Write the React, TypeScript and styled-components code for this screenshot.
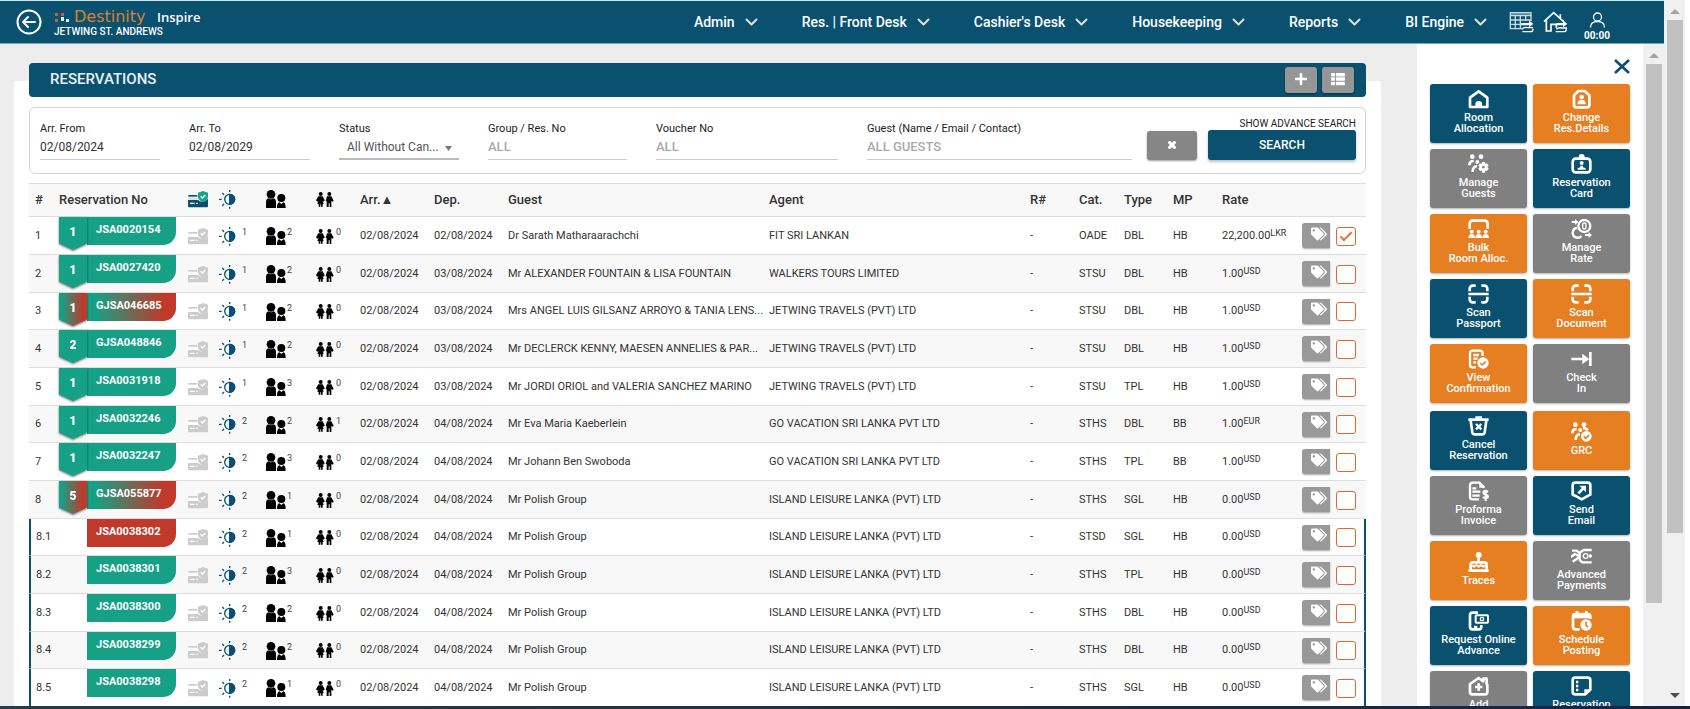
import React from "react";
import styled, { createGlobalStyle, css } from "styled-components";
import { FaPlus, FaTags, FaThList, FaTimes } from "react-icons/fa";

const color = {
  navy: "#0a506f",
  orange: "#e67e22",
  grey: "#808080",
  green: "#16a085",
  red: "#c0392b",
  line: "#dddddd",
};

type Tone = "navy" | "orange" | "grey";
type Status = "ok" | "mixed" | "off";

const GlobalStyle = createGlobalStyle`
  *, *::before, *::after { box-sizing: border-box; }
  body { margin: 0; background: #ffffff; color: #222222; font-family: Roboto, "Liberation Sans", sans-serif; font-size: 12px; }
  button, input, select { font-family: inherit; margin: 0; }
  button { cursor: pointer; }
`;

/* ---------- page frame ---------- */

const Page = styled.div`
  display: flex;
  flex-direction: column;
  height: 100vh;
  overflow: hidden;
`;

const Frame = styled.div`
  display: flex;
  flex: 1;
  min-height: 0;
  padding-right: 5px;
`;

const Screen = styled.div`
  display: flex;
  flex-direction: column;
  flex: 1;
  min-width: 0;
`;

const Taskbar = styled.div`
  flex: none;
  height: 3px;
  background: linear-gradient(90deg, #243d4a, #1b2145);
`;

const Body = styled.div`
  display: flex;
  flex: 1;
  min-height: 0;
`;

const Main = styled.main`
  flex: 1;
  min-width: 0;
  overflow: hidden;
  padding: 37px 36px 0 14px;
  background: #ededed;
`;

const Panel = styled.section`
  min-height: 100%;
  padding: 0 15px;
  background: #ffffff;
  border-radius: 3px;
`;

/* ---------- scroll bars ---------- */

const Track = styled.div`
  display: flex;
  flex-direction: column;
  flex: none;
  align-items: center;
  width: 21px;
  background: #f0f0f0;
`;

const Arrow = styled.svg`
  flex: none;
  width: 10px;
  height: 20px;
`;

const Thumb = styled.div<{ $share: number }>`
  flex: ${(p) => p.$share};
  width: 16px;
  background: #c1c1c1;
`;

const Rest = styled.div<{ $share: number }>`
  flex: ${(p) => p.$share};
`;

function ScrollBar({ share, end }: { share: number; end?: boolean }) {
  return (
    <Track aria-hidden="true">
      <Arrow viewBox="0 0 10 20"><path d="M0 14l5-5 5 5z" fill="#a3a3a3" /></Arrow>
      <Thumb $share={share} />
      <Rest $share={100 - share} />
      {end && <Arrow viewBox="0 0 10 20"><path d="M0 7l5 5 5-5z" fill="#505050" /></Arrow>}
    </Track>
  );
}

/* ---------- top bar ---------- */

const TopBar = styled.header`
  display: flex;
  flex: none;
  align-items: center;
  height: 44px;
  padding: 0 53px 0 16px;
  color: #ffffff;
  background: ${color.navy};
  border-top: 1px solid #d3e6ec;
  border-bottom: 1px solid #7ea3b3;
`;

const BareButton = styled.button`
  display: flex;
  padding: 0;
  color: inherit;
  background: none;
  border: 0;
`;

const Brand = styled.div`
  display: flex;
  flex-direction: column;
  margin-left: 12px;
  padding-top: 2px;
`;

const BrandLine = styled.div`
  display: flex;
  align-items: center;
  height: 18px;
`;

const BrandName = styled.span`
  min-width: 76px;
  margin-left: 4px;
  color: #d9822f;
  font: 16px/18px "DejaVu Sans", sans-serif;
`;

const BrandProduct = styled.span`
  margin-left: 7px;
  font: 600 13px/18px "Open Sans", sans-serif;
`;

const Hotel = styled.span`
  font-size: 10px;
  font-weight: 500;
  line-height: 12px;
`;

const Nav = styled.nav`
  display: flex;
  gap: 44px;
  margin-left: auto;
`;

const NavItem = styled.button`
  display: flex;
  align-items: center;
  gap: 10px;
  padding: 0 0 1px;
  color: #ffffff;
  font-size: 14px;
  font-weight: 500;
  background: none;
  border: 0;
`;

const Tools = styled.div`
  display: flex;
  align-items: center;
  gap: 9px;
  margin-left: 22px;
`;

const User = styled.button`
  display: flex;
  flex-direction: column;
  align-items: center;
  gap: 3px;
  width: 28px;
  margin-left: 6px;
  padding: 8px 0 0;
  color: #ffffff;
  font-size: 10px;
  font-weight: 700;
  line-height: 10px;
  background: none;
  border: 0;
`;

const NAV = ["Admin", "Res. | Front Desk", "Cashier's Desk", "Housekeeping", "Reports", "BI Engine"];

function Header() {
  return (
    <TopBar>
      <BareButton aria-label="Back">
        <svg width="26" height="26" viewBox="0 0 26 26" fill="none" stroke="#fff" strokeWidth="2" strokeLinecap="round" strokeLinejoin="round">
          <circle cx="13" cy="13" r="11.500" />
          <path d="M19 13H7.500M12 8l-5 5 5 5" />
        </svg>
      </BareButton>
      <Brand>
        <BrandLine>
          <svg width="16" height="12" viewBox="0 0 16 12" aria-hidden="true">
            <path d="M1 2h3v3H1zM1 8h3v3H1z" fill="#b5674a" />
            <path d="M7 2h3v3H7z" fill="#d9534f" />
            <path d="M7 6h3v4H7zM12 8h3v3h-3z" fill="#e8edf2" />
          </svg>
          <BrandName>Destinity</BrandName>
          <BrandProduct>Inspire</BrandProduct>
        </BrandLine>
        <Hotel>JETWING ST. ANDREWS</Hotel>
      </Brand>
      <Nav>
        {NAV.map((name) => (
          <NavItem key={name}>
            {name}
            <svg width="13" height="8" viewBox="0 0 13 8" fill="none" stroke="#e3e0d2" strokeWidth="2" strokeLinecap="round" strokeLinejoin="round">
              <path d="M1.500 1.500l5 5 5-5" />
            </svg>
          </NavItem>
        ))}
      </Nav>
      <Tools>
        <BareButton aria-label="Calendar">
          <svg width="25" height="22" viewBox="0 0 75 66" fill="none" stroke="#c9dbe3" strokeWidth="4">
            <path d="M4 5h62v9H4z" fill="#c9dbe3" fillOpacity=".4" />
            <path d="M4 14v39h34M66 14v16M4 27h62M4 40h36M19 14v39M34 14v39M50 14v16" />
            <path d="M36 36h24v-8l13 11-13 10v-6H36z" fill="#fff" stroke="none" />
            <path d="M38 55c8-8 14-6 18-5h16M40 62h26c5 0 6-6 6-9" stroke="#fff" />
          </svg>
        </BareButton>
        <BareButton aria-label="Home">
          <svg width="25" height="22" viewBox="0 0 75 66" fill="none" stroke="#fff" strokeWidth="5">
            <path d="M3 32L32 5l30 27M10 27v33h14V40h16v10M52 10v10" />
            <path d="M40 36h20v-8l13 11-13 10v-6H40z" fill="#fff" stroke="none" />
            <path d="M40 55c6-6 12-5 16-4h16M38 62h26c5 0 6-6 6-9" strokeWidth="4" />
          </svg>
        </BareButton>
        <User>
          <svg width="17" height="16" viewBox="0 0 17 16" fill="none" stroke="#fff" strokeWidth="1.300">
            <circle cx="8.500" cy="5" r="4" />
            <path d="M1.500 15.500c0-4 3-6 7-6s7 2 7 6" />
          </svg>
          00:00
        </User>
      </Tools>
    </TopBar>
  );
}

/* ---------- title and search ---------- */

const TitleBar = styled.div`
  display: flex;
  position: relative;
  top: -18px;
  align-items: center;
  gap: 5px;
  height: 34px;
  margin-bottom: -8px;
  padding: 0 12px 0 21px;
  background: ${color.navy};
  border-radius: 4px;
`;

const Title = styled.h1`
  flex: 1;
  margin: 0;
  padding-bottom: 2px;
  color: #e9f3f7;
  font-size: 15px;
  font-weight: 500;
  line-height: 18px;
`;

const SquareButton = styled.button`
  display: flex;
  align-items: center;
  justify-content: center;
  width: 32px;
  height: 26px;
  padding: 0 0 2px;
  color: #ffffff;
  font-size: 14px;
  background: #969696;
  border: 0;
  border-radius: 3px;
  box-shadow: 0 1px 2px rgba(0, 0, 0, 0.4);
`;

const SearchForm = styled.form`
  display: flex;
  align-items: flex-end;
  padding: 10px 9px 13px 10px;
  border: 1px solid #d4d4d4;
  border-radius: 6px;
`;

const Fields = styled.div`
  display: grid;
  flex: 1;
  grid-template-columns: 120px 121px 120px 139px 182px 1fr;
  gap: 29px;
`;

const Field = styled.div`
  display: flex;
  flex-direction: column;
  position: relative;
`;

const FieldLabel = styled.label`
  font-size: 11px;
  line-height: 14px;
  white-space: nowrap;
`;

const controlText = css`
  width: 100%;
  height: 24px;
  padding: 0 0 1px;
  color: #333333;
  font-size: 12px;
  background: none;
  border: 0;
  border-radius: 0;
  outline: 0;
`;

const TextBox = styled.input`
  ${controlText}
  border-bottom: 1px solid #cccccc;
  &::placeholder { color: #aaaaaa; font-size: 13px; font-weight: 500; opacity: 1; }
`;

const Picker = styled.select`
  ${controlText}
  padding-left: 8px;
  color: #555555;
  appearance: none;
  border-bottom: 2px solid #bbbbbb;
`;

const PickerArrow = styled.svg`
  position: absolute;
  right: 7px;
  bottom: 9px;
  width: 7px;
  height: 5px;
  pointer-events: none;
`;

const ClearButton = styled(SquareButton)`
  width: 50px;
  height: 29px;
  margin: 0 11px 0 15px;
  background: #868686;
`;

const ClearIcon = styled(FaTimes)`
  width: 10px;
  height: 10px;
  stroke: #ffffff;
  stroke-width: 60;
`;

const SubmitArea = styled.div`
  display: flex;
  flex-direction: column;
  width: 148px;
`;

const AdvancedLink = styled.a`
  align-self: flex-end;
  color: #222222;
  font-size: 10px;
  line-height: 12px;
  text-decoration: none;
  white-space: nowrap;
`;

const SearchButton = styled.button`
  height: 30px;
  padding: 0 0 1px;
  color: #ffffff;
  font-size: 12px;
  font-weight: 500;
  background: ${color.navy};
  border: 0;
  border-radius: 3px;
  box-shadow: 0 2px 3px rgba(0, 0, 0, 0.25);
`;

function TextField({ id, label, value, hint }: { id: string; label: string; value?: string; hint?: string }) {
  return (
    <Field>
      <FieldLabel htmlFor={id}>{label}</FieldLabel>
      <TextBox id={id} defaultValue={value} placeholder={hint} />
    </Field>
  );
}

function Search() {
  return (
    <SearchForm onSubmit={(e) => e.preventDefault()}>
      <Fields>
        <TextField id="from" label="Arr. From" value="02/08/2024" />
        <TextField id="to" label="Arr. To" value="02/08/2029" />
        <Field>
          <FieldLabel htmlFor="status">Status</FieldLabel>
          <Picker id="status"><option>All Without Can...</option></Picker>
          <PickerArrow viewBox="0 0 7 5"><path d="M0 0h7L3.500 5z" fill="#777" /></PickerArrow>
        </Field>
        <TextField id="group" label="Group / Res. No" hint="ALL" />
        <TextField id="voucher" label="Voucher No" hint="ALL" />
        <TextField id="guest" label="Guest (Name / Email / Contact)" hint="ALL GUESTS" />
      </Fields>
      <ClearButton type="button" aria-label="Clear"><ClearIcon /></ClearButton>
      <SubmitArea>
        <AdvancedLink href="#advanced">SHOW ADVANCE SEARCH</AdvancedLink>
        <SearchButton type="submit">SEARCH</SearchButton>
      </SubmitArea>
    </SearchForm>
  );
}

/* ---------- table icons ---------- */

function CardIcon({ active }: { active?: boolean }) {
  const base = active ? color.navy : "#cccccc";
  return (
    <svg width="20" height="17" viewBox="0 0 60 51">
      <path d="M1 12h27v5H1z" fill={base} />
      <path d="M0 20h30v6H0z" fill={active ? "#d5dde1" : "#ffffff"} />
      <path d="M0 27h31c5 6 16 9 29-4v23a3 3 0 0 1-3 3H3a3 3 0 0 1-3-3z" fill={base} />
      <path d="M6 37h14M25 37h4" stroke="#fff" strokeWidth="4" />
      <path d="M45 0l15 5v12c0 8-6 13-15 17-9-4-15-9-15-17V5z" fill={active ? "#17a58a" : "#cccccc"} />
      <path d="M38 16l5 5 9-9" fill="none" stroke="#fff" strokeWidth="4" />
    </svg>
  );
}

function NightIcon() {
  return (
    <svg width="17" height="19" viewBox="0 0 51 57" fill="none" stroke="#0a4f78" strokeWidth="4">
      <circle cx="32" cy="28" r="15" />
      <path d="M32 13a15 15 0 0 1 0 30z" fill="#0a4f78" />
      <path d="M32 0v6M32 50v6M0 28h8M10 9l5 5M10 47l5-5" />
    </svg>
  );
}

function AdultsIcon() {
  return (
    <svg width="20" height="18" viewBox="0 0 60 54">
      <circle cx="15" cy="13" r="13" />
      <path d="M0 54V37c0-7 3-11 7-12 5 4 11 4 16 0 4 1 7 5 7 12v17z" />
      <circle cx="46" cy="24" r="12" />
      <path d="M33 54c0-10 2-16 7-17l6 5 6-5c5 1 7 7 7 17z" />
    </svg>
  );
}

function KidsIcon() {
  return (
    <svg width="18" height="15" viewBox="0 0 54 45">
      <circle cx="14" cy="6" r="6" />
      <path d="M7 13h13l6 12-3 4-3-2 3 9h-3v8h-5v-7h-2v7H8v-8H4l3-9-3 2-4-4z" />
      <circle cx="40" cy="6" r="6" />
      <path d="M33 13h13l7 13-3 3-4-2v18h-5V34h-3v11h-6V28l-3-1z" />
    </svg>
  );
}

/* ---------- reservations table ---------- */

const Grid = styled.table`
  width: 100%;
  margin-top: 9px;
  table-layout: fixed;
  border-collapse: separate;
  border-spacing: 0;
`;

const HeadCell = styled.th`
  height: 34px;
  padding: 0 0 2px;
  color: #333333;
  font-size: 13px;
  font-weight: 500;
  text-align: left;
  white-space: nowrap;
  background: #f8f8f8;
  border: solid ${color.line};
  border-width: 1px 0;
  &:first-child { padding-left: 6px; }
  svg { display: block; }
`;

const Cell = styled.td`
  height: inherit;
  padding: 0;
  overflow: hidden;
  color: #333333;
  font-size: 11px;
  line-height: 14px;
  text-overflow: ellipsis;
  white-space: nowrap;
  border-bottom: 1px solid ${color.line};
`;

const Row = styled.tr<{ $child: boolean }>`
  height: 38px;
  &:nth-child(3n) { height: 37px; }
  &:nth-child(even) { background: #f8f8f8; }
  ${Cell}:first-child { padding-left: 6px; }
  ${(p) =>
    p.$child &&
    css`
      ${Cell}:first-child { padding-left: 5px; border-left: 2px solid ${color.navy}; }
      ${Cell}:last-child { border-right: 2px solid ${color.navy}; }
    `}
`;

const NameCell = styled(Cell)`
  padding-right: 4px;
`;

const TagCell = styled(Cell)`
  overflow: visible;
  vertical-align: top;
`;

const fill = {
  ok: color.green,
  mixed: `linear-gradient(90deg, ${color.green} 10%, ${color.red} 85%)`,
  off: color.red,
};

const TagLine = styled.div`
  display: grid;
  grid-template-columns: 28px 89px;
  align-items: start;
  height: 28px;
`;

const RibbonShadow = styled.div`
  position: relative;
  z-index: 1;
  filter: drop-shadow(0 1px 1px rgba(0, 0, 0, 0.55));
`;

const Ribbon = styled.div<{ $status: Status }>`
  height: 33px;
  color: #ffffff;
  font-size: 12px;
  font-weight: 900;
  line-height: 30px;
  text-align: center;
  background: ${(p) => fill[p.$status]};
  clip-path: polygon(0 0, 100% 0, 100% 80%, 50% 100%, 0 80%);
`;

const Code = styled.a<{ $status: Status }>`
  grid-column: 2;
  height: 28px;
  padding-left: 9px;
  color: #ffffff;
  font-size: 11px;
  font-weight: 700;
  line-height: 26px;
  text-decoration: none;
  background: ${(p) => fill[p.$status]};
  border-bottom-right-radius: 13px;
`;

const Count = styled.div<{ $gap: number }>`
  display: flex;
  align-items: center;
  gap: ${(p) => p.$gap}px;
  padding-top: 1px;
  span {
    padding-bottom: 8px;
    color: #444444;
    font-size: 9px;
    line-height: 10px;
  }
`;

const Money = styled.span`
  sup {
    font-size: 9px;
    line-height: 8px;
    vertical-align: 3px;
  }
`;

const TagButton = styled.button`
  display: flex;
  align-items: center;
  justify-content: center;
  width: 28px;
  height: 25px;
  padding: 0 0 4px 6px;
  color: #ffffff;
  font-size: 16px;
  background: #999999;
  border: 0;
  border-radius: 3px 0 0 3px;
  box-shadow: 0 1px 2px rgba(0, 0, 0, 0.35);
`;

const Tick = styled.input`
  display: grid;
  place-items: center;
  width: 20px;
  height: 19px;
  margin-top: 1px;
  background: #ffffff;
  border: 1px solid #e8642b;
  border-radius: 3px;
  outline: 0;
  appearance: none;
  &:checked::before {
    content: "";
    width: 12px;
    height: 6px;
    margin-bottom: 3px;
    border: solid #e8702a;
    border-width: 0 0 2px 2px;
    transform: rotate(-45deg);
  }
`;

interface Booking {
  no: string;
  count?: number;
  code: string;
  status: Status;
  nights: number;
  adults: number;
  kids: number;
  dep: string;
  guest: string;
  agent: string;
  cat: string;
  type: string;
  mp: string;
  rate: string;
  cur: string;
}

const JET = "JETWING TRAVELS (PVT) LTD";
const GO = "GO VACATION SRI LANKA PVT LTD";
const ISLAND = "ISLAND LEISURE LANKA (PVT) LTD";

const booking = (
  no: string, count: number | undefined, code: string, status: Status,
  nights: number, adults: number, kids: number, dep: string,
  guest: string, agent: string, cat: string, type: string, mp: string, rate: string, cur: string,
): Booking => ({ no, count, code, status, nights, adults, kids, dep, guest, agent, cat, type, mp, rate, cur });

const BOOKINGS: Booking[] = [
  booking("1", 1, "JSA0020154", "ok", 1, 2, 0, "02/08/2024", "Dr Sarath Matharaarachchi", "FIT SRI LANKAN", "OADE", "DBL", "HB", "22,200.00", "LKR"),
  booking("2", 1, "JSA0027420", "ok", 1, 2, 0, "03/08/2024", "Mr ALEXANDER FOUNTAIN & LISA FOUNTAIN", "WALKERS TOURS LIMITED", "STSU", "DBL", "HB", "1.00", "USD"),
  booking("3", 1, "GJSA046685", "mixed", 1, 2, 0, "03/08/2024", "Mrs ANGEL LUIS GILSANZ ARROYO & TANIA LENS...", JET, "STSU", "DBL", "HB", "1.00", "USD"),
  booking("4", 2, "GJSA048846", "ok", 1, 2, 0, "03/08/2024", "Mr DECLERCK KENNY, MAESEN ANNELIES & PAR...", JET, "STSU", "DBL", "HB", "1.00", "USD"),
  booking("5", 1, "JSA0031918", "ok", 1, 3, 0, "03/08/2024", "Mr JORDI ORIOL and VALERIA SANCHEZ MARINO", JET, "STSU", "TPL", "HB", "1.00", "USD"),
  booking("6", 1, "JSA0032246", "ok", 2, 2, 1, "04/08/2024", "Mr Eva Maria Kaeberlein", GO, "STHS", "DBL", "BB", "1.00", "EUR"),
  booking("7", 1, "JSA0032247", "ok", 2, 3, 0, "04/08/2024", "Mr Johann Ben Swoboda", GO, "STHS", "TPL", "BB", "1.00", "USD"),
  booking("8", 5, "GJSA055877", "mixed", 2, 1, 0, "04/08/2024", "Mr Polish Group", ISLAND, "STHS", "SGL", "HB", "0.00", "USD"),
  booking("8.1", undefined, "JSA0038302", "off", 2, 1, 0, "04/08/2024", "Mr Polish Group", ISLAND, "STSD", "SGL", "HB", "0.00", "USD"),
  booking("8.2", undefined, "JSA0038301", "ok", 2, 3, 0, "04/08/2024", "Mr Polish Group", ISLAND, "STHS", "TPL", "HB", "0.00", "USD"),
  booking("8.3", undefined, "JSA0038300", "ok", 2, 2, 0, "04/08/2024", "Mr Polish Group", ISLAND, "STHS", "DBL", "HB", "0.00", "USD"),
  booking("8.4", undefined, "JSA0038299", "ok", 2, 2, 0, "04/08/2024", "Mr Polish Group", ISLAND, "STHS", "DBL", "HB", "0.00", "USD"),
  booking("8.5", undefined, "JSA0038298", "ok", 2, 1, 0, "04/08/2024", "Mr Polish Group", ISLAND, "STHS", "SGL", "HB", "0.00", "USD"),
];

/* Guest and Agent have no width of their own and share what is left. */
const COLUMNS: (number | undefined)[] = [30, 129, 31, 47, 50, 44, 74, 74, undefined, undefined, 49, 45, 49, 49, 80, 34, 30];

function Bookings() {
  return (
    <Grid>
      <colgroup>
        {COLUMNS.map((width, i) => <col key={i} width={width} />)}
      </colgroup>
      <thead>
        <tr>
          <HeadCell>#</HeadCell>
          <HeadCell>Reservation No</HeadCell>
          <HeadCell aria-label="Guarantee"><CardIcon active /></HeadCell>
          <HeadCell aria-label="Nights"><NightIcon /></HeadCell>
          <HeadCell aria-label="Adults"><AdultsIcon /></HeadCell>
          <HeadCell aria-label="Children"><KidsIcon /></HeadCell>
          <HeadCell>Arr.▲</HeadCell>
          <HeadCell>Dep.</HeadCell>
          <HeadCell>Guest</HeadCell>
          <HeadCell>Agent</HeadCell>
          <HeadCell>R#</HeadCell>
          <HeadCell>Cat.</HeadCell>
          <HeadCell>Type</HeadCell>
          <HeadCell>MP</HeadCell>
          <HeadCell>Rate</HeadCell>
          <HeadCell aria-label="Tags" />
          <HeadCell aria-label="Selected" />
        </tr>
      </thead>
      <tbody>
        {BOOKINGS.map((b) => (
          <Row key={b.no} $child={b.count === undefined}>
            <Cell>{b.no}</Cell>
            <TagCell>
              <TagLine>
                {b.count !== undefined && (
                  <RibbonShadow><Ribbon $status={b.status}>{b.count}</Ribbon></RibbonShadow>
                )}
                <Code href={`#${b.code}`} $status={b.status}>{b.code}</Code>
              </TagLine>
            </TagCell>
            <Cell><Count $gap={0}><CardIcon /></Count></Cell>
            <Cell><Count $gap={6}><NightIcon /><span>{b.nights}</span></Count></Cell>
            <Cell><Count $gap={1}><AdultsIcon /><span>{b.adults}</span></Count></Cell>
            <Cell><Count $gap={2}><KidsIcon /><span>{b.kids}</span></Count></Cell>
            <Cell>02/08/2024</Cell>
            <Cell>{b.dep}</Cell>
            <NameCell>{b.guest}</NameCell>
            <Cell>{b.agent}</Cell>
            <Cell>-</Cell>
            <Cell>{b.cat}</Cell>
            <Cell>{b.type}</Cell>
            <Cell>{b.mp}</Cell>
            <Cell><Money>{b.rate}<sup>{b.cur}</sup></Money></Cell>
            <Cell><TagButton aria-label={`Tags of ${b.code}`}><FaTags /></TagButton></Cell>
            <Cell><Tick type="checkbox" aria-label={`Select ${b.code}`} defaultChecked={b.no === "1"} /></Cell>
          </Row>
        ))}
      </tbody>
    </Grid>
  );
}

/* ---------- action drawer ---------- */

const Drawer = styled.aside`
  flex: none;
  width: 226px;
  padding: 15px 13px 0;
  overflow: hidden;
  background: #ffffff;
`;

const CloseButton = styled(BareButton)`
  margin: 0 0 10px auto;
  color: ${color.navy};
`;

const ActionGroup = styled.div`
  display: grid;
  grid-template-columns: 1fr 1fr;
  grid-auto-rows: 59px;
  gap: 6px;
  margin-bottom: 8px;
`;

const Action = styled.button<{ $tone: Tone }>`
  display: flex;
  flex-direction: column;
  align-items: center;
  justify-content: center;
  gap: 3px;
  padding: 0 0 4px;
  color: #ffffff;
  font-size: 11px;
  font-weight: 500;
  line-height: 11px;
  white-space: pre-line;
  background: ${(p) => color[p.$tone]};
  border: 0;
  border-radius: 3px;
  box-shadow: 0 1px 2px rgba(0, 0, 0, 0.3);
`;

const Glyph = styled.svg`
  flex: none;
  width: 21px;
  height: 20px;
  fill: none;
  stroke: #ffffff;
  stroke-width: 8;
  stroke-linejoin: round;
  .solid { fill: #ffffff; stroke: none; }
  .thin { stroke-width: 4; }
`;

const crowd = (
  <>
    <circle className="solid" cx="13" cy="8" r="7" />
    <circle className="solid" cx="39" cy="8" r="7" />
    <circle className="solid" cx="28" cy="24" r="6" />
    <path d="M4 34c0-9 4-13 13-13M14 54c0-12 4-17 13-18" />
  </>
);

const icons: Record<string, React.ReactNode> = {
  house: (
    <>
      <path d="M6 54V26L32 7l26 19v28z" />
      <path className="solid" d="M22 56V44a10 8 0 0 1 20 0v12z" />
    </>
  ),
  badge: (
    <>
      <path d="M22 6h19l14 13v29a7 7 0 0 1-7 7H16a7 7 0 0 1-7-7V19z" />
      <circle className="solid" cx="32" cy="24" r="7" />
      <path className="solid" d="M19 46c0-9 5-14 13-14s13 5 13 14z" />
    </>
  ),
  manage: (
    <>
      {crowd}
      <path className="solid" fillRule="evenodd" d="M42 24h9l1 6 5-2 5 7-4 4 4 5-5 7-5-2-1 7h-9l-1-7-5 2-5-7 4-5-4-4 5-7 5 2zM46 35a4 4 0 1 0 .100 0z" />
    </>
  ),
  card: (
    <>
      <rect x="5" y="14" width="53" height="41" rx="9" />
      <circle className="solid" cx="32" cy="9" r="9" />
      <circle className="solid" cx="32" cy="27" r="6" />
      <path className="solid" d="M20 47v-4l8-3v-5h8v5l8 3v4z" />
    </>
  ),
  bulk: (
    <>
      <path d="M5 29V14a9 9 0 0 1 9-9h36a9 9 0 0 1 9 9v15" />
      <circle className="solid" cx="11" cy="38" r="6" />
      <circle className="solid" cx="32" cy="38" r="6" />
      <circle className="solid" cx="53" cy="38" r="6" />
      <path className="solid" d="M1 57c0-8 4-12 10-12s10 4 10 12zM22 57c0-8 4-12 10-12s10 4 10 12zM43 57c0-8 4-12 10-12s10 4 10 12z" />
    </>
  ),
  rate: (
    <>
      <circle cx="40" cy="21" r="18" strokeWidth="7" />
      <rect className="thin" x="35" y="12" width="10" height="18" rx="5" />
      <path d="M18 27c-15 1-19 26 0 29 6 1 10-1 13-5" strokeWidth="7" />
      <path className="solid" d="M2 6h10V0l10 9-10 9v-6H2zM42 45h11v-6l10 9-10 9v-6H42z" />
    </>
  ),
  scan: (
    <path d="M5 22V14a9 9 0 0 1 9-9h9M40 5h9a9 9 0 0 1 9 9v8M5 38v8a9 9 0 0 0 9 9h9M40 55h9a9 9 0 0 0 9-9v-8M1 30h61" />
  ),
  confirm: (
    <>
      <path d="M24 55H14a8 8 0 0 1-8-8V13a8 8 0 0 1 8-8h22a8 8 0 0 1 8 8v8M16 18h17M16 29h13M16 40h8" strokeWidth="7" />
      <circle className="solid" cx="45" cy="42" r="17" />
      <path d="M37 42l6 6 10-10" stroke={color.orange} strokeWidth="5" />
    </>
  ),
  checkin: (
    <>
      <path d="M1 30h40M58 9v42" />
      <path className="solid" d="M34 14l21 16-21 16z" />
    </>
  ),
  trash: (
    <>
      <path d="M1 11h61M22 5h20M8 14l5 35a7 7 0 0 0 7 6h23a7 7 0 0 0 7-6l5-35" />
      <path d="M24 24l16 16M40 24L24 40" strokeWidth="7" />
    </>
  ),
  grc: (
    <>
      {crowd}
      <path d="M36 18c8 0 12 3 14 7" />
      <circle className="solid" cx="46" cy="43" r="16" />
      <path d="M38 43l6 6 10-10" stroke={color.orange} strokeWidth="5" />
    </>
  ),
  invoice: (
    <>
      <path d="M33 55H14a8 8 0 0 1-8-8V13a8 8 0 0 1 8-8h20l15 15M13 22h12M13 32h24M13 44h22" strokeWidth="7" />
      <path className="solid" d="M34 3l17 17H34z" />
      <path d="M60 33c-4-4-14-4-14 2 0 7 14 4 14 11s-11 6-15 2M53 26v34" strokeWidth="6" />
    </>
  ),
  send: (
    <>
      <path d="M13 5h37a8 8 0 0 1 8 8v28l-10 5-16 9-16-9-11-5V13a8 8 0 0 1 8-8z" />
      <path d="M22 37l16-16" />
      <path className="solid" d="M25 14h20v20z" />
    </>
  ),
  trace: (
    <>
      <circle className="solid" cx="32" cy="9" r="9" />
      <path d="M32 12v18M8 54V38a7 7 0 0 1 7-7h34a7 7 0 0 1 7 7v16M1 56h61" />
      <path d="M10 39l8 5 7-5 7 5 7-5 7 5 8-5" strokeWidth="6" />
    </>
  ),
  payment: (
    <>
      <path d="M3 14h14l10 8M0 33l12-9 13 6-8 9-12 8M62 12H38l-12 8v22l8 7h28" strokeWidth="7" />
      <circle className="thin" cx="44" cy="30" r="7" />
      <circle className="solid" cx="58" cy="30" r="5" />
    </>
  ),
  online: (
    <>
      <path d="M30 5H14a8 8 0 0 0-8 8v34a8 8 0 0 0 8 8h18a8 8 0 0 0 8-8v-5" />
      <path d="M18 48h10" strokeWidth="7" />
      <rect x="23" y="13" width="37" height="22" rx="2" strokeWidth="6" />
      <circle className="thin" cx="42" cy="24" r="5" />
    </>
  ),
  schedule: (
    <>
      <path d="M26 55H14a8 8 0 0 1-8-8V16a7 7 0 0 1 7-7h38a7 7 0 0 1 7 7v8M18 0v12M46 0v12" />
      <path className="solid" d="M5 9h54v13H5z" />
      <circle className="solid" cx="45" cy="42" r="17" />
      <path d="M45 32v11l6 5" stroke={color.orange} strokeWidth="5" />
    </>
  ),
  addhouse: (
    <>
      <path d="M6 48V24L32 6l14 10V8h10v16l2 2v22a7 7 0 0 1-7 7H13a7 7 0 0 1-7-7z" />
      <path d="M32 22v22M21 33h22" strokeWidth="8" />
    </>
  ),
  note: (
    <>
      <path d="M13 5h37a8 8 0 0 1 8 8v28L43 55H13a8 8 0 0 1-8-8V13a8 8 0 0 1 8-8z" />
      <path d="M15 18h7M15 30h7M15 42h7" />
      <path className="solid" d="M40 57V40h20z" />
    </>
  ),
};

type ActionSpec = [string, Tone, string];

const ACTIONS: ActionSpec[][] = [
  [
    ["house", "navy", "Room\nAllocation"],
    ["badge", "orange", "Change\nRes.Details"],
    ["manage", "grey", "Manage\nGuests"],
    ["card", "navy", "Reservation\nCard"],
    ["bulk", "orange", "Bulk\nRoom Alloc."],
    ["rate", "grey", "Manage\nRate"],
    ["scan", "navy", "Scan\nPassport"],
    ["scan", "orange", "Scan\nDocument"],
    ["confirm", "orange", "View\nConfirmation"],
    ["checkin", "grey", "Check\nIn"],
  ],
  [
    ["trash", "navy", "Cancel\nReservation"],
    ["grc", "orange", "GRC"],
    ["invoice", "grey", "Proforma\nInvoice"],
    ["send", "navy", "Send\nEmail"],
    ["trace", "orange", "Traces"],
    ["payment", "grey", "Advanced\nPayments"],
    ["online", "navy", "Request Online\nAdvance"],
    ["schedule", "orange", "Schedule\nPosting"],
    ["addhouse", "grey", "Add\nRoom"],
    ["note", "navy", "Reservation\nNotes"],
  ],
];

function Actions() {
  return (
    <Drawer>
      <CloseButton aria-label="Close">
        <svg width="16" height="15" viewBox="0 0 16 15" stroke="currentColor" strokeWidth="2.600">
          <path d="M1 1l14 13M15 1L1 14" />
        </svg>
      </CloseButton>
      {ACTIONS.map((group, i) => (
        <ActionGroup key={i}>
          {group.map(([icon, tone, text]) => (
            <Action key={text} $tone={tone}>
              <Glyph viewBox="0 0 63 60">{icons[icon]}</Glyph>
              {text}
            </Action>
          ))}
        </ActionGroup>
      ))}
    </Drawer>
  );
}

export default function App() {
  return (
    <Page>
      <GlobalStyle />
      <Frame>
        <Screen>
          <Header />
          <Body>
            <Main>
              <Panel>
                <TitleBar>
                  <Title>RESERVATIONS</Title>
                  <SquareButton aria-label="Add reservation"><FaPlus /></SquareButton>
                  <SquareButton aria-label="List view"><FaThList /></SquareButton>
                </TitleBar>
                <Search />
                <Bookings />
              </Panel>
            </Main>
            <Actions />
            <ScrollBar share={84} />
          </Body>
        </Screen>
        <ScrollBar share={77} end />
      </Frame>
      <Taskbar />
    </Page>
  );
}
